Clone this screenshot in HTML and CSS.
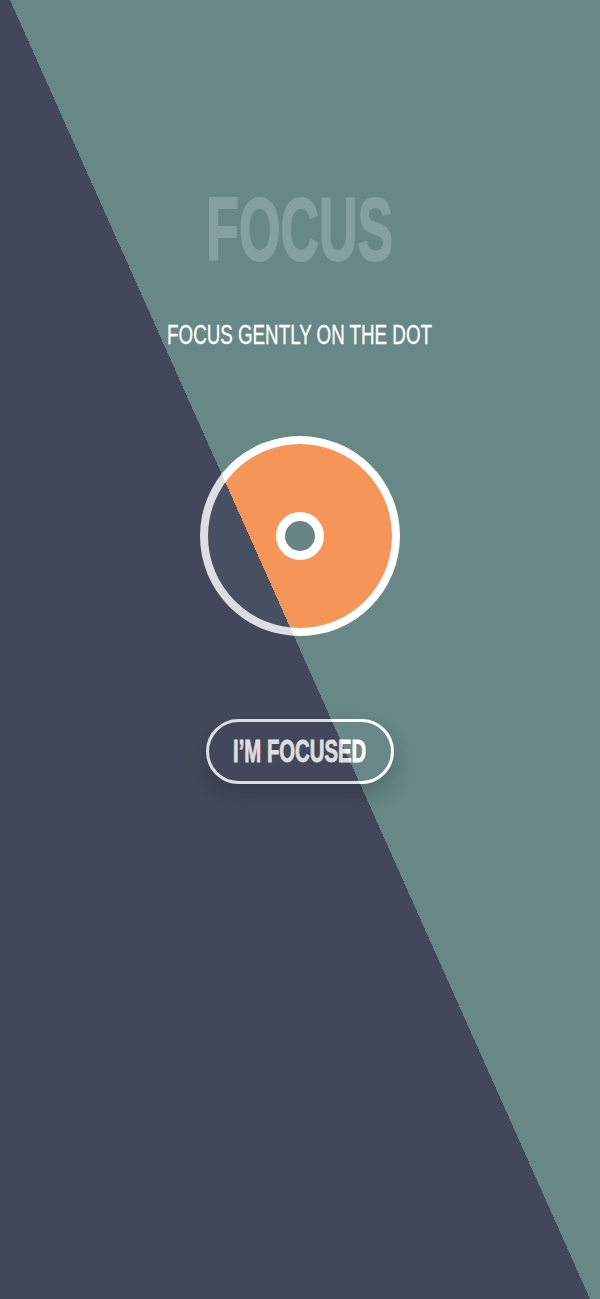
FILE: index.html
```html
<!DOCTYPE html>
<html lang="en">
<head>
<meta charset="utf-8">
<title>Focus</title>
<link rel="stylesheet" href="styles.css">
</head>
<body>
<main class="screen">
  <h1 class="title"><span class="squeeze">FOCUS</span></h1>
  <p class="subtitle"><span class="squeeze">FOCUS GENTLY ON THE DOT</span></p>
  <div class="ring">
    <div class="disc">
      <div class="dot"></div>
    </div>
  </div>
  <button class="focused-btn" type="button"><span class="squeeze">I’M FOCUSED</span></button>
  <div class="shade" aria-hidden="true"></div>
</main>
</body>
</html>
```

FILE: styles.css
```css
html, body {
  margin: 0;
  padding: 0;
}

body {
  width: 600px;
  height: 1299px;
  overflow: hidden;
  font-family: "Liberation Sans", Arial, sans-serif;
  background: linear-gradient(65.94deg, #434959 50%, #678887 50%) fixed;
}

.screen {
  position: relative;
  height: 1299px;
  display: flex;
  flex-direction: column;
  align-items: center;
}

.squeeze {
  display: inline-block;
  white-space: nowrap;
}

.title {
  margin: 185px 0 0;
  font-size: 89px;
  line-height: 1;
  font-weight: 700;
  color: #84a1a0;
}

.title .squeeze {
  transform: scaleX(0.6);
  -webkit-text-stroke: 2px #84a1a0;
}

.subtitle {
  margin: 48px 0 0;
  font-size: 27px;
  line-height: 1;
  font-weight: 400;
  color: #ffffff;
}

.subtitle .squeeze {
  transform: scaleX(0.695);
  -webkit-text-stroke: 0.3px #ffffff;
}

.ring {
  margin-top: 87px;
  width: 200px;
  height: 200px;
  border-radius: 50%;
  background: #ffffff;
  display: flex;
  align-items: center;
  justify-content: center;
}

.disc {
  width: 184px;
  height: 184px;
  border-radius: 50%;
  background: linear-gradient(65.94deg, #485262 50%, #f59658 50%) fixed;
  display: flex;
  align-items: center;
  justify-content: center;
}

.dot {
  width: 30px;
  height: 30px;
  border-radius: 50%;
  border: 9px solid #ffffff;
  background: #658685;
}

.focused-btn {
  margin-top: 83px;
  width: 188px;
  height: 65px;
  border: 3px solid #ffffff;
  border-radius: 33px;
  background: transparent;
  box-shadow: 0 12px 20px rgba(20, 24, 36, 0.25);
  color: #ffffff;
  font-family: inherit;
  font-size: 31px;
  font-weight: 700;
  line-height: 1;
  padding: 0;
  display: flex;
  align-items: center;
  justify-content: center;
}

.focused-btn .squeeze {
  transform: scaleX(0.655);
  -webkit-text-stroke: 0.8px #ffffff;
}

.shade {
  position: absolute;
  inset: 0;
  background: rgba(67, 73, 89, 0.18);
  clip-path: polygon(0 0, 10px 0, 590px 100%, 0 100%);
  pointer-events: none;
}
```
